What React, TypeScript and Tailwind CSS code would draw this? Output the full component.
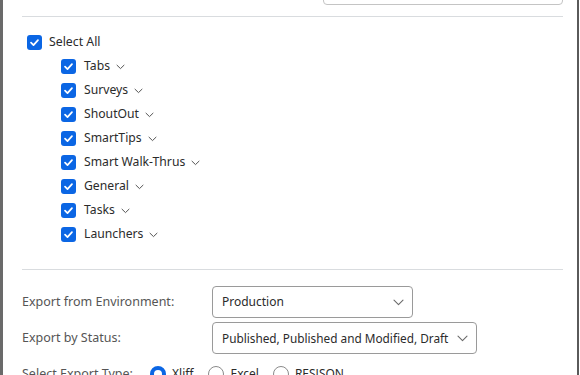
import React from "react";

const Check = () => (
  <span className="flex h-[15px] w-[15px] items-center justify-center rounded-[3px] bg-[#0b66e4]">
    <svg width="11" height="11" viewBox="0 0 12 12" fill="none">
      <path d="M2.2 6.2 L4.9 8.8 L9.8 3.4" stroke="white" strokeWidth="1.9" strokeLinecap="round" strokeLinejoin="round" />
    </svg>
  </span>
);

const SmallChevron = () => (
  <svg width="9" height="6" viewBox="0 0 9 6" fill="none" className="ml-[6px] mt-[2px]">
    <path d="M1 1.2 L4.5 4.6 L8 1.2" stroke="#555" strokeWidth="1" strokeLinecap="round" strokeLinejoin="round" />
  </svg>
);

const SelectChevron = () => (
  <svg width="11" height="7" viewBox="0 0 11 7" fill="none">
    <path d="M1 1.2 L5.5 5.6 L10 1.2" stroke="#6b6b6b" strokeWidth="1.1" strokeLinecap="round" strokeLinejoin="round" />
  </svg>
);

const items = ["Tabs", "Surveys", "ShoutOut", "SmartTips", "Smart Walk-Thrus", "General", "Tasks", "Launchers"];

export default function App() {
  return (
    <div
      className="relative h-[375px] w-[580px] overflow-hidden bg-white text-[12px] leading-[18px] text-[#2b2b2b]"
      style={{ fontFamily: '"Noto Sans", "Open Sans", sans-serif' }}
    >
      <div className="absolute left-0 top-0 h-full w-[3px] bg-[#6a6a6a]" />
      <div className="absolute right-0 top-0 h-full w-[3px] bg-white" />
      <div className="absolute right-[1px] top-0 h-full w-[2px] bg-[#5a5a5a]" />

      <div className="ml-[22px] w-[541px]">
        <div className="flex h-[16px] justify-end">
          <div className="mt-[-25px] h-[30px] w-[240px] rounded-[4px] border border-[#c4c4c4]" />
        </div>
        <div className="h-px bg-[#d9dcdf]" />

        <div className="pt-[16px]">
          <div className="flex h-[18px] items-center pl-[5px]">
            <Check />
            <span className="ml-[7px] text-[12.3px]">Select All</span>
          </div>
          <div className="mt-[6px] flex flex-col gap-[6px] pl-[39px]">
            {items.map((t) => (
              <div key={t} className="flex h-[18px] items-center">
                <Check />
                <span className="ml-[8px] text-[12.2px]">{t}</span>
                <SmallChevron />
              </div>
            ))}
          </div>
        </div>

        <div className="mt-[26px] h-px bg-[#d9dcdf]" />

        <div className="pt-[16px]">
          <div className="flex items-center">
            <span className="w-[190px] text-[12.5px] text-[#555]">Export from Environment:</span>
            <div className="flex h-[32px] w-[201px] items-center justify-between rounded-[4px] border border-[#9a9a9a] pl-[9px] pr-[8px]">
              <span>Production</span>
              <SelectChevron />
            </div>
          </div>
          <div className="mt-[4px] flex items-center">
            <span className="w-[190px] text-[12.5px] text-[#555]">Export by Status:</span>
            <div className="flex h-[32px] w-[265px] items-center justify-between rounded-[4px] border border-[#9a9a9a] pl-[9px] pr-[8px]">
              <span className="whitespace-nowrap text-[11.8px]">Published, Published and Modified, Draft</span>
              <SelectChevron />
            </div>
          </div>
          <div className="mt-[11px] flex items-center">
            <span className="w-[128px] text-[12.5px] text-[#555]">Select Export Type:</span>
            <span className="h-[16px] w-[16px] rounded-full border-[4px] border-[#0b66e4] bg-white" />
            <span className="ml-[6px]">Xliff</span>
            <span className="ml-[15px] h-[16px] w-[16px] rounded-full border border-[#8a8a8a]" />
            <span className="ml-[6px]">Excel</span>
            <span className="ml-[14px] h-[16px] w-[16px] rounded-full border border-[#8a8a8a]" />
            <span className="ml-[6px]">RESJSON</span>
          </div>
        </div>
      </div>
    </div>
  );
}
